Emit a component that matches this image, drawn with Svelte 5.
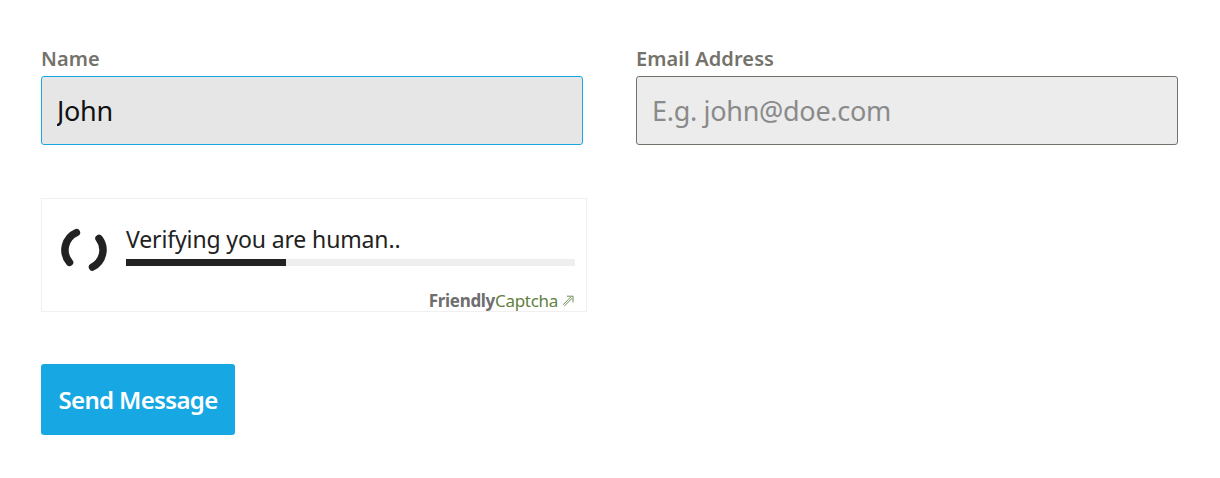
<script>
  let name = $state('John');
</script>

<form class="form">
  <div class="row">
    <div class="field">
      <label for="n">Name</label>
      <input id="n" class="focused" bind:value={name} />
    </div>
    <div class="field">
      <label for="e">Email Address</label>
      <input id="e" placeholder="E.g. john@doe.com" />
    </div>
  </div>

  <div class="captcha">
    <div class="main">
      <svg class="spin" width="46" height="46" viewBox="0 0 46 46" aria-hidden="true">
        <path d="M15.4 5.6 A19 19 0 0 0 8.5 35.3" />
        <path d="M38 11.4 A19 19 0 0 1 31.5 40" />
      </svg>
      <div class="status">
        <div class="text">Verifying you are human..</div>
        <div class="track"><div class="bar"></div></div>
      </div>
    </div>
    <div class="brand">
      <b>Friendly</b><span>Captcha</span>
      <svg width="12" height="12" viewBox="0 0 12 12" aria-hidden="true">
        <path d="M1 9.8 L8.8 2 M2.4 11 L10.2 3.2 M4.8 1.2 H11 V7.4" />
      </svg>
    </div>
  </div>

  <button type="button" class="send">Send Message</button>
</form>

<style>
  :global(body) {
    margin: 0;
    background: #fff;
  }
  .form {
    box-sizing: border-box;
    width: 1220px;
    height: 478px;
    padding: 46px 42px 0 41px;
    font-family: "Noto Sans", "Open Sans", sans-serif;
  }
  .row {
    display: flex;
    gap: 53px;
  }
  .field {
    flex: 1;
    display: flex;
    flex-direction: column;
  }
  label {
    font-size: 20px;
    font-weight: 600;
    line-height: 26px;
    color: #74726b;
    margin-bottom: 4px;
    letter-spacing: 0.1px;
  }
  input {
    box-sizing: border-box;
    width: 100%;
    height: 69px;
    padding: 0 15px;
    border: 1px solid #74726b;
    border-radius: 3px;
    background: #ececec;
    font-family: inherit;
    font-size: 27px;
    letter-spacing: -0.3px;
    color: #111;
    outline: none;
  }
  input::placeholder {
    color: #8a8a8a;
    opacity: 1;
  }
  input.focused {
    border-color: #17a8e3;
    background: #e6e6e6;
  }
  .captcha {
    box-sizing: border-box;
    width: 546px;
    height: 114px;
    margin-top: 53px;
    border: 1px solid #f0f0f0;
    display: flex;
    flex-direction: column;
    justify-content: space-between;
  }
  .main {
    display: flex;
    align-items: flex-start;
    padding: 16px 11px 0 19px;
  }
  .spin {
    flex: none;
    margin-top: 12px;
    margin-right: 19px;
    width: 46px;
    height: 46px;
  }
  .spin path {
    fill: none;
    stroke: #222;
    stroke-width: 7.5;
    stroke-linecap: round;
  }
  .status {
    flex: 1;
    min-width: 0;
  }
  .text {
    font-size: 23px;
    line-height: 34px;
    color: #222;
    letter-spacing: -0.13px;
    height: 27px;
    margin-top: 10px;
    display: flex;
    align-items: center;
  }
  .track {
    height: 7px;
    margin-top: 7px;
    background: #eee;
  }
  .bar {
    height: 100%;
    width: 160px;
    background: #222;
  }
  .brand {
    display: flex;
    justify-content: flex-end;
    align-items: center;
    padding: 1px 12px 0 0;
    height: 20px;
    font-size: 17px;
    line-height: 20px;
    letter-spacing: -0.3px;
    color: #5f8141;
  }
  .brand b {
    font-weight: 700;
    color: #6e6e6e;
  }
  .brand span {
    margin-right: -1px;
  }
  .brand svg {
    margin-left: 5px;
  }
  .brand path {
    fill: none;
    stroke: #5f8141;
    stroke-width: 0.9;
  }
  .send {
    display: block;
    width: 194px;
    height: 71px;
    margin-top: 52px;
    border: 0;
    border-radius: 3px;
    background: #17a8e3;
    color: #fff;
    font-family: inherit;
    font-size: 24px;
    font-weight: 600;
    letter-spacing: -0.65px;
    padding: 0;
  }
</style>
